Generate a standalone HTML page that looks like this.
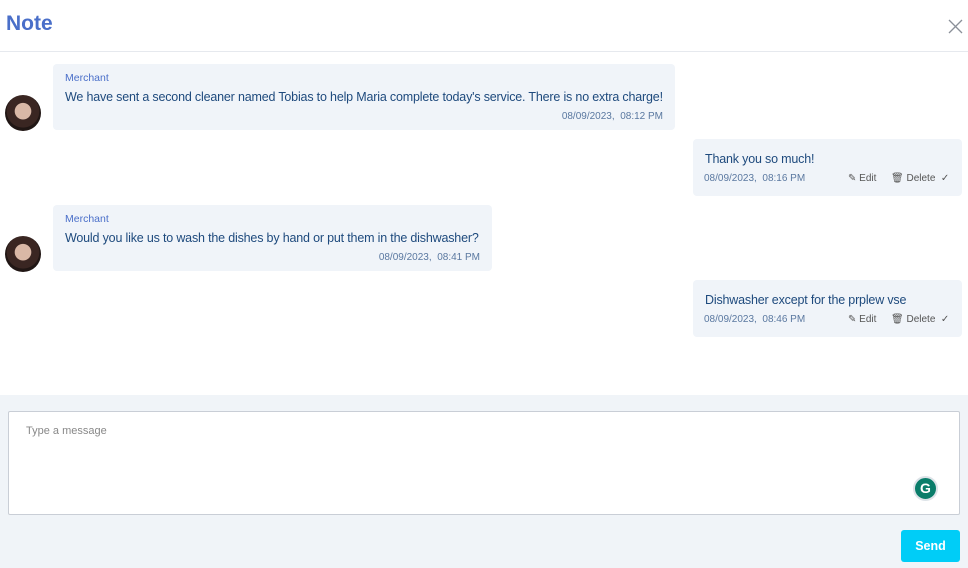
<!DOCTYPE html>
<html><head><style>
*{box-sizing:border-box;margin:0;padding:0}
body{width:968px;height:568px;overflow:hidden;background:#fff;font-family:"Liberation Sans",sans-serif;position:relative}
.hdr{position:absolute;left:0;top:0;width:968px;height:52px;border-bottom:1px solid #e6e9ee}
.hdr h1{position:absolute;left:6px;top:12px;font-size:21px;color:#4a6fc9;font-weight:bold}
.x{position:absolute;left:948px;top:19px}
.b{position:absolute;background:#f0f4f9;border-radius:4px}
.nm{position:absolute;left:12px;top:8px;font-size:10.5px;color:#4a6fc9}
.tx{position:absolute;left:12px;font-size:12.5px;letter-spacing:-0.18px;color:#1e4a7d;white-space:nowrap}
.tm{position:absolute;font-size:10px;color:#5a78a0;white-space:nowrap}
.act{position:absolute;font-size:10px;color:#555;white-space:nowrap}
.av{position:absolute;left:5px;width:36px;height:36px;border-radius:50%;background:radial-gradient(circle at 50% 45%,#d9b8a6 0 30%,#3a2622 32% 60%,#201614 62%);overflow:hidden}
.bot{position:absolute;left:0;top:395px;width:968px;height:173px;background:#f0f4f8}
.ta{position:absolute;left:8px;top:411px;width:952px;height:104px;background:#fff;border:1px solid #c9ced6;border-radius:2px}
.ta span{position:absolute;left:17px;top:13px;font-size:11px;color:#888}
.send{position:absolute;left:901px;top:530px;width:59px;height:32px;background:#00cdf7;border-radius:3px;color:#fff;font-weight:bold;font-size:12.5px;text-align:center;line-height:32px}
.g{position:absolute;left:913px;top:476px;width:25px;height:25px;border-radius:50%;background:#0a7d6a;border:2px solid #dde3e8;color:#fff;font-weight:bold;font-size:14px;text-align:center;line-height:21px}
</style></head><body>
<div class="hdr"><h1>Note</h1>
<svg class="x" width="15" height="15" viewBox="0 0 15 15"><path d="M1 1L14 14M14 1L1 14" stroke="#8a9099" stroke-width="1.3"/></svg></div>

<div class="av" style="top:95px"></div>
<div class="b" style="left:53px;top:64px;width:622px;height:66px">
<div class="nm">Merchant</div><div class="tx" style="top:26px">We have sent a second cleaner named Tobias to help Maria complete today's service. There is no extra charge!</div>
<div class="tm" style="right:12px;top:47px">08/09/2023,&nbsp; 08:12 PM</div></div>

<div class="b" style="left:693px;top:139px;width:269px;height:57px">
<div class="tx" style="top:13px">Thank you so much!</div>
<div class="tm" style="left:11px;top:34px">08/09/2023,&nbsp; 08:16 PM</div>
<div class="act" style="left:155px;top:34px">✎ Edit</div><div class="act" style="left:198px;top:34px">🗑 Delete &nbsp;✓</div></div>

<div class="av" style="top:236px"></div>
<div class="b" style="left:53px;top:205px;width:439px;height:66px">
<div class="nm">Merchant</div><div class="tx" style="top:26px">Would you like us to wash the dishes by hand or put them in the dishwasher?</div>
<div class="tm" style="right:12px;top:47px">08/09/2023,&nbsp; 08:41 PM</div></div>

<div class="b" style="left:693px;top:280px;width:269px;height:57px">
<div class="tx" style="top:13px">Dishwasher except for the prplew vse</div>
<div class="tm" style="left:11px;top:34px">08/09/2023,&nbsp; 08:46 PM</div>
<div class="act" style="left:155px;top:34px">✎ Edit</div><div class="act" style="left:198px;top:34px">🗑 Delete &nbsp;✓</div></div>

<div class="bot"></div>
<div class="ta"><span>Type a message</span></div>
<div class="g">G</div>
<div class="send">Send</div>
</body></html>
